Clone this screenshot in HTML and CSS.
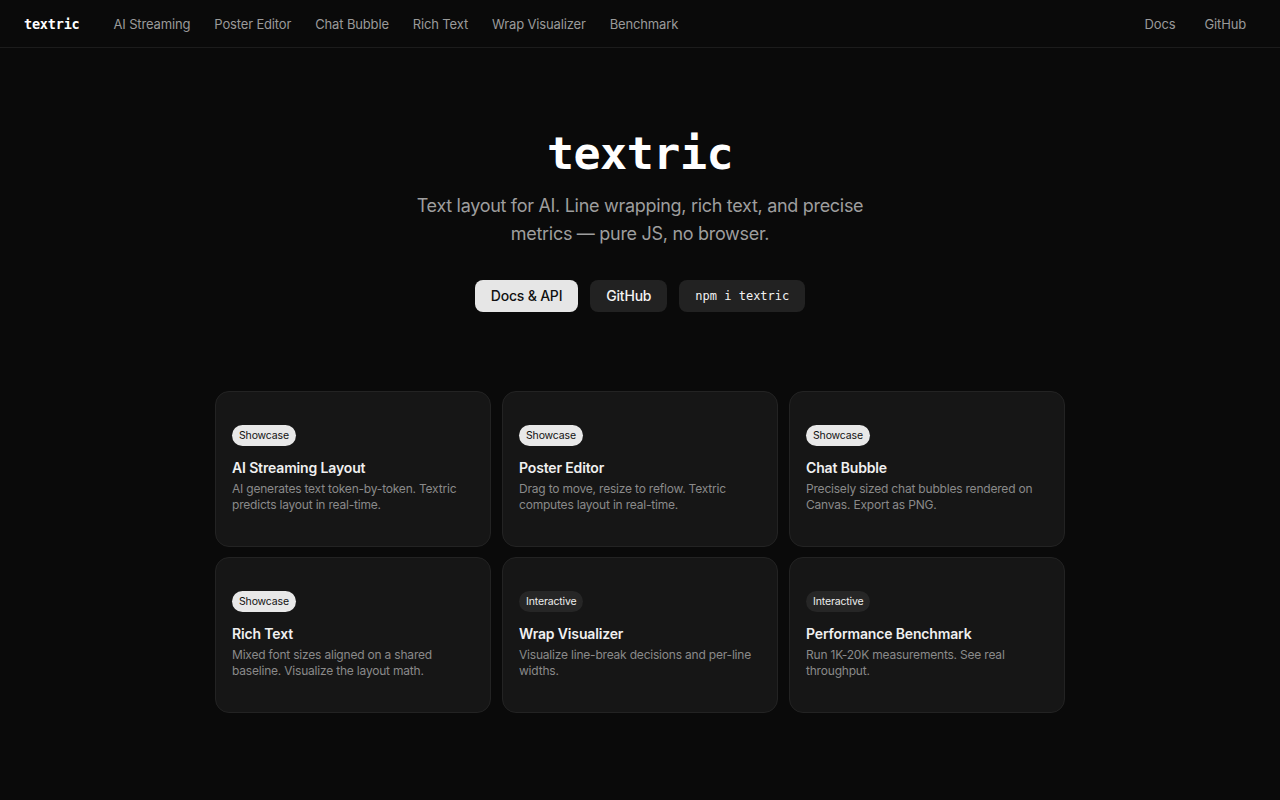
FILE: index.html
```html
<!DOCTYPE html>
<html lang="en">
<head>
  <meta charset="UTF-8" />
  <meta name="viewport" content="width=device-width, initial-scale=1.0"/>
  <title>textric – Text layout for AI</title>
  <link rel="stylesheet" href="styles.css">
</head>
<body>
<nav class="topbar">
  <div class="topbar-left">
    <a href="#" class="logo">textric</a>
    <a href="#" class="nav-link">AI Streaming</a>
    <a href="#" class="nav-link">Poster Editor</a>
    <a href="#" class="nav-link">Chat Bubble</a>
    <a href="#" class="nav-link">Rich Text</a>
    <a href="#" class="nav-link">Wrap Visualizer</a>
    <a href="#" class="nav-link">Benchmark</a>
  </div>
  <div class="topbar-right">
    <a href="#" class="nav-link">Docs</a>
    <a href="#" class="nav-link">GitHub</a>
  </div>
</nav>

<header class="hero">
  <h1>textric</h1>
  <p class="tagline">Text layout for AI. Line wrapping, rich text, and precise metrics — pure JS, no browser.</p>
  <div class="hero-actions">
    <a href="#" class="btn btn-light">Docs &amp; API</a>
    <a href="#" class="btn btn-dark">GitHub</a>
    <span class="btn btn-dark btn-code">npm i textric</span>
  </div>
</header>

<main class="demos">
  <a href="#" class="card">
    <span class="tag tag-showcase">Showcase</span>
    <h3>AI Streaming Layout</h3>
    <p>AI generates text token-by-token. Textric predicts layout in real-time.</p>
  </a>
  <a href="#" class="card">
    <span class="tag tag-showcase">Showcase</span>
    <h3>Poster Editor</h3>
    <p>Drag to move, resize to reflow. Textric computes layout in real-time.</p>
  </a>
  <a href="#" class="card">
    <span class="tag tag-showcase">Showcase</span>
    <h3>Chat Bubble</h3>
    <p>Precisely sized chat bubbles rendered on Canvas. Export as PNG.</p>
  </a>
  <a href="#" class="card">
    <span class="tag tag-showcase">Showcase</span>
    <h3>Rich Text</h3>
    <p>Mixed font sizes aligned on a shared baseline. Visualize the layout math.</p>
  </a>
  <a href="#" class="card">
    <span class="tag tag-interactive">Interactive</span>
    <h3>Wrap Visualizer</h3>
    <p>Visualize line-break decisions and per-line widths.</p>
  </a>
  <a href="#" class="card">
    <span class="tag tag-interactive">Interactive</span>
    <h3>Performance Benchmark</h3>
    <p>Run 1K-20K measurements. See real throughput.</p>
  </a>
</main>
</body>
</html>
```

FILE: styles.css
```css
body {
  font-family: 'Inter', 'Noto Sans', sans-serif;
  background: #0a0a0a;
  color: #ededed;
  margin: 0;
  padding: 0;
}
a {
  text-decoration: none;
  color: inherit;
}

/* barra de topo */
.topbar {
  height: 47px;
  border-bottom: 1px solid #1c1c1c;
  display: flex;
  justify-content: space-between;
  align-items: center;
  padding: 0 34px 0 24px;
}
.topbar-left,
.topbar-right {
  display: flex;
  align-items: center;
  gap: 24px;
}
.topbar-right {
  gap: 29px;
}
.logo {
  font-family: 'DejaVu Sans Mono', 'Liberation Mono', monospace;
  font-weight: bold;
  font-size: 13.5px;
  color: #fff;
  margin-right: 10px;
  letter-spacing: -0.2px;
}
.nav-link {
  font-size: 13px;
  letter-spacing: -0.15px;
  color: #9a9a9a;
}
.nav-link:hover {
  color: #fff;
}

/* hero */
.hero {
  text-align: center;
  padding-top: 78px;
}
.hero h1 {
  font-family: 'DejaVu Sans Mono', 'Liberation Mono', monospace;
  font-weight: bold;
  font-size: 45px;
  letter-spacing: -0.5px;
  color: #fff;
  margin: 0;
  line-height: 56px;
}
.tagline {
  font-size: 18px;
  line-height: 28px;
  letter-spacing: -0.3px;
  color: #9e9e9e;
  max-width: 460px;
  margin: 10px auto 0;
}
.hero-actions {
  display: flex;
  justify-content: center;
  gap: 12px;
  margin-top: 32px;
}
.btn {
  height: 32px;
  line-height: 32px;
  padding: 0 16px;
  border-radius: 8px;
  font-size: 14px;
  font-weight: 500;
  letter-spacing: -0.2px;
}
.btn-light {
  background: #e6e6e6;
  color: #111;
}
.btn-dark {
  background: #222;
  color: #f2f2f2;
}
.btn-code {
  font-family: 'DejaVu Sans Mono', 'Liberation Mono', monospace;
  font-size: 12px;
  font-weight: normal;
  letter-spacing: 0;
}

/* grelha de demos */
.demos {
  width: 850px;
  margin: 79px auto 0;
  display: grid;
  grid-template-columns: repeat(3, 1fr);
  gap: 10px 11px;
}
.card {
  display: flex;
  flex-direction: column;
  align-items: flex-start;
  height: 156px;
  box-sizing: border-box;
  padding: 33px 16px 0;
  background: #161616;
  border: 1px solid #232323;
  border-radius: 14px;
}
.card:hover {
  border-color: #333;
}
.tag {
  display: block;
  font-size: 10.5px;
  line-height: 21px;
  padding: 0 7px;
  border-radius: 11px;
  letter-spacing: -0.15px;
}
.tag-showcase {
  background: #e8e8e8;
  color: #111;
}
.tag-interactive {
  background: #262626;
  color: #ededed;
}
.card h3 {
  font-size: 14px;
  font-weight: 600;
  letter-spacing: -0.15px;
  color: #f0f0f0;
  margin: 12px 0 0;
  line-height: 20px;
}
.card p {
  font-size: 12px;
  line-height: 16px;
  letter-spacing: -0.2px;
  color: #8a8a8a;
  margin: 3px 0 0;
}
```
